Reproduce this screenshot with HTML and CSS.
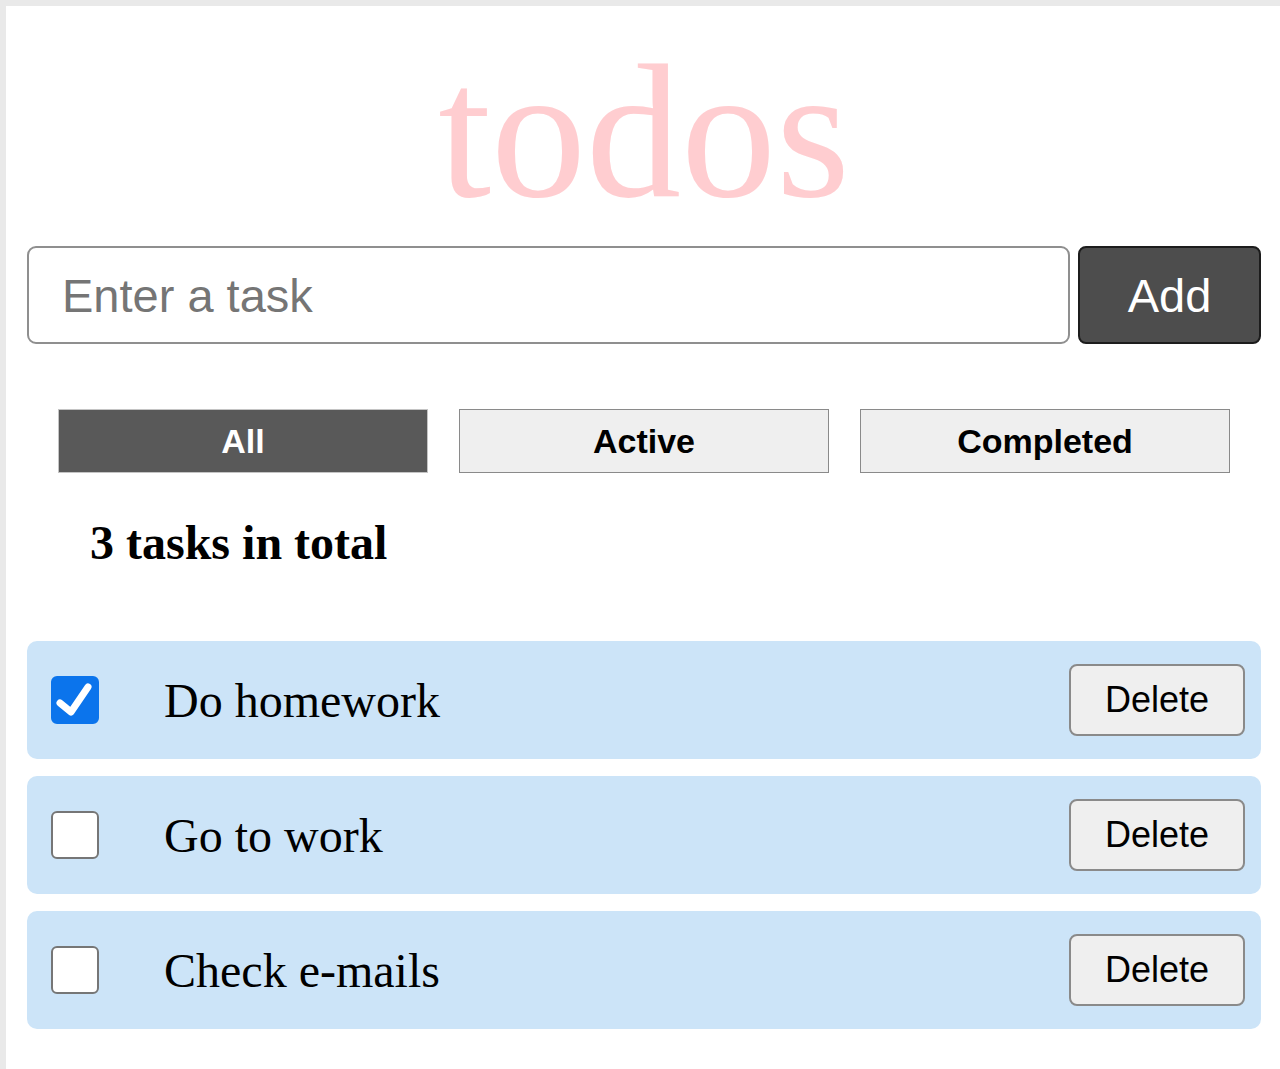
FILE: index.html
```html
<!DOCTYPE html>
<html lang="en">
<head>
<meta charset="utf-8">
<title>todos</title>
<link rel="stylesheet" href="styles.css">
</head>
<body>
<div class="page">
  <h1 class="title">todos</h1>
  <form class="new-task">
    <input class="task-input" type="text" placeholder="Enter a task">
    <button class="add-btn" type="button">Add</button>
  </form>
  <div class="filters">
    <button class="filter filter-active" type="button">All</button>
    <button class="filter" type="button">Active</button>
    <button class="filter" type="button">Completed</button>
  </div>
  <h2 class="count">3 tasks in total</h2>
  <ul class="tasks">
    <li class="task">
      <span class="check checked">
        <svg viewBox="0 0 48 48" width="48" height="48"><path d="M9 27 L20 36 L37 11" fill="none" stroke="#fff" stroke-width="7" stroke-linecap="round" stroke-linejoin="round"/></svg>
      </span>
      <span class="task-name">Do homework</span>
      <button class="delete-btn" type="button">Delete</button>
    </li>
    <li class="task">
      <span class="check"></span>
      <span class="task-name">Go to work</span>
      <button class="delete-btn" type="button">Delete</button>
    </li>
    <li class="task">
      <span class="check"></span>
      <span class="task-name">Check e-mails</span>
      <button class="delete-btn" type="button">Delete</button>
    </li>
  </ul>
</div>
</body>
</html>
```
FILE: styles.css
```css
html, body {
  margin: 0;
  padding: 0;
}
body {
  background: #e9e9e9;
  font-family: "Liberation Serif", "Times New Roman", serif;
}
.page {
  background: #fff;
  margin: 6px 0 0 6px;
  min-height: 1063px;
  padding: 0 19px 0 21px;
  box-sizing: border-box;
  display: flex;
  flex-direction: column;
}
.title {
  margin: 17px 0 0;
  text-align: center;
  font-family: "Liberation Serif", serif;
  font-weight: normal;
  font-size: 190px;
  line-height: normal;
  height: 210px;
  color: #ffcdd0;
}
.new-task {
  margin: 13px 0 0;
  display: flex;
  gap: 8px;
  height: 98px;
}
.task-input {
  flex: 1;
  box-sizing: border-box;
  height: 98px;
  border: 2px solid #8f8f8f;
  border-radius: 9px;
  padding: 0 0 0 33px;
  font-family: "Liberation Sans", Arial, sans-serif;
  font-size: 47px;
  color: #222;
  outline: none;
}
.task-input::placeholder {
  color: #757575;
}
.add-btn {
  width: 183px;
  height: 98px;
  box-sizing: border-box;
  background: #4d4d4d;
  border: 2px solid #1c1c1c;
  border-radius: 8px;
  color: #fff;
  font-family: "Liberation Sans", Arial, sans-serif;
  font-size: 47px;
  padding: 0;
}
.filters {
  margin-top: 65px;
  display: flex;
  justify-content: space-evenly;
}
.filter {
  width: 370px;
  height: 64px;
  box-sizing: border-box;
  background: #efefef;
  border: 1px solid #8a8a8a;
  border-radius: 0;
  font-family: "Liberation Sans", Arial, sans-serif;
  font-weight: bold;
  font-size: 34px;
  color: #000;
  padding: 0;
}
.filter-active {
  background: #595959;
  border-color: #c4c4c4;
  color: #fff;
}
.count {
  margin: 42px 0 0;
  padding-left: 63px;
  font-family: "Liberation Serif", serif;
  font-weight: bold;
  font-size: 48px;
  line-height: normal;
  color: #000;
}
.tasks {
  list-style: none;
  margin: 71px 0 0;
  padding: 0;
  display: flex;
  flex-direction: column;
  gap: 17px;
}
.task {
  height: 118px;
  box-sizing: border-box;
  background: #cce4f8;
  border-radius: 10px;
  display: flex;
  align-items: center;
  padding: 0 16px 0 24px;
}
.check {
  width: 48px;
  height: 48px;
  box-sizing: border-box;
  border: 2px solid #767676;
  border-radius: 6px;
  background: #fff;
  display: block;
  flex: none;
  position: relative;
}
.check.checked {
  background: #0b74ec;
  border-color: #0b74ec;
}
.check svg {
  position: absolute;
  left: -2px;
  top: -2px;
}
.task-name {
  margin-left: 65px;
  flex: 1;
  font-family: "Liberation Serif", serif;
  font-size: 48px;
  color: #000;
}
.delete-btn {
  width: 176px;
  height: 72px;
  box-sizing: border-box;
  background: #efefef;
  border: 2px solid #8a8a8a;
  border-radius: 8px;
  font-family: "Liberation Sans", Arial, sans-serif;
  font-size: 36px;
  color: #000;
  padding: 0;
}
```
